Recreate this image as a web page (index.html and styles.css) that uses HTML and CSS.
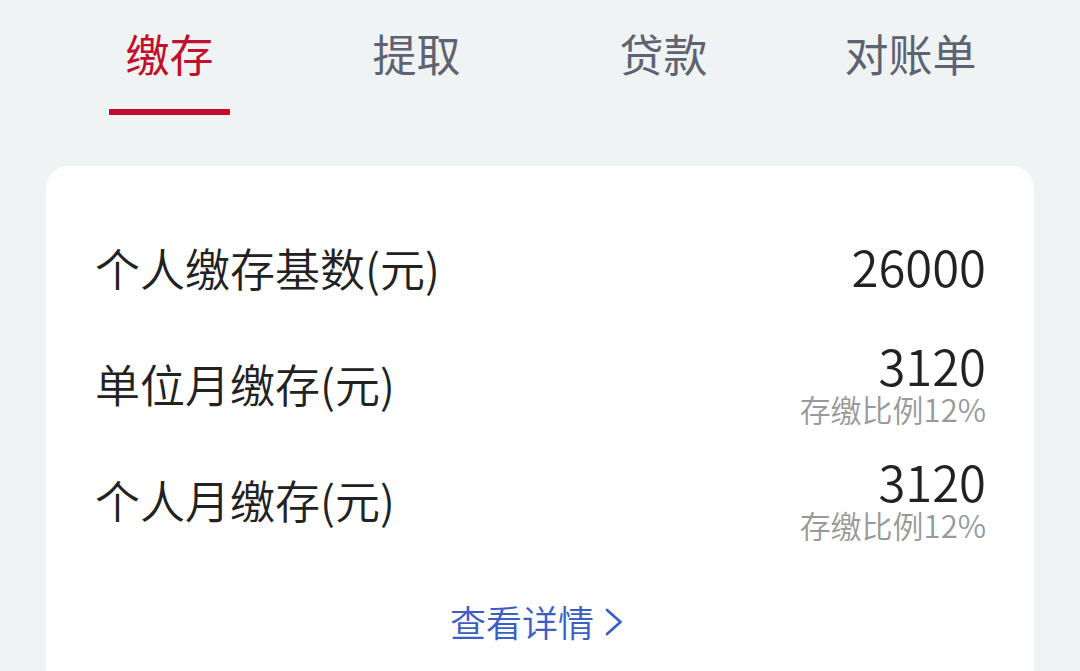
FILE: index.html
```html
<!DOCTYPE html>
<html lang="zh-CN">
<head>
<meta charset="utf-8">
<title>缴存</title>
<link rel="stylesheet" href="styles.css">
</head>
<body>
<nav class="tabs">
  <div class="tab active"><span class="tab-text">缴存</span><span class="tab-bar"></span></div>
  <div class="tab"><span class="tab-text">提取</span></div>
  <div class="tab"><span class="tab-text">贷款</span></div>
  <div class="tab"><span class="tab-text">对账单</span></div>
</nav>
<section class="card">
  <div class="row">
    <div class="label">个人缴存基数(元)</div>
    <div class="value-col"><div class="value">26000</div></div>
  </div>
  <div class="row">
    <div class="label">单位月缴存(元)</div>
    <div class="value-col"><div class="value">3120</div><div class="sub">存缴比例12%</div></div>
  </div>
  <div class="row">
    <div class="label">个人月缴存(元)</div>
    <div class="value-col"><div class="value">3120</div><div class="sub">存缴比例12%</div></div>
  </div>
  <a class="more" href="#">查看详情<svg class="chev" width="18" height="28" viewBox="0 0 18 28"><polyline points="2,2 15.5,14 2,26" fill="none" stroke="currentColor" stroke-width="2.8" stroke-linecap="round" stroke-linejoin="round"/></svg></a>
</section>
</body>
</html>
```
FILE: styles.css
```css
html, body {
  margin: 0;
  padding: 0;
  background: #eff3f4;
  font-family: "Noto Sans CJK SC", "Noto Sans", sans-serif;
  font-weight: 350;
  overflow: hidden;
}
.tabs {
  display: grid;
  grid-template-columns: repeat(4, 1fr);
  margin: 0 46px;
  height: 115px;
}
.tab {
  display: flex;
  flex-direction: column;
  align-items: center;
  padding-top: 31px;
}
.tab-text {
  font-size: 44px;
  line-height: 44px;
  font-weight: 400;
  color: #5f6371;
}
.tab.active .tab-text {
  color: #c20f2b;
}
.tab-bar {
  display: block;
  width: 121px;
  height: 6px;
  margin-top: 34px;
  background: #c10d2d;
}
.card {
  margin: 51px 46px 0;
  background: #ffffff;
  border-radius: 22px;
  padding: 44px 48px 60px 49px;
  min-height: 520px;
  box-sizing: border-box;
}
.row {
  height: 116px;
  display: flex;
  justify-content: space-between;
  align-items: center;
}
.label {
  font-size: 45px;
  line-height: 46px;
  color: #222222;
}
.value-col {
  display: flex;
  flex-direction: column;
  align-items: flex-end;
}
.value {
  font-size: 49px;
  line-height: 46px;
  color: #222222;
}
.sub {
  font-size: 31px;
  line-height: 34px;
  color: #999999;
  margin-top: 4px;
}
.row:first-child .value {
  margin-top: -4px;
}
.more {
  display: flex;
  justify-content: center;
  align-items: center;
  gap: 11px;
  margin-top: 43px;
  padding-right: 8px;
  font-size: 36px;
  line-height: 40px;
  color: #3b5ec4;
  text-decoration: none;
}
.chev {
  display: block;
  margin-top: 2px;
}
```
